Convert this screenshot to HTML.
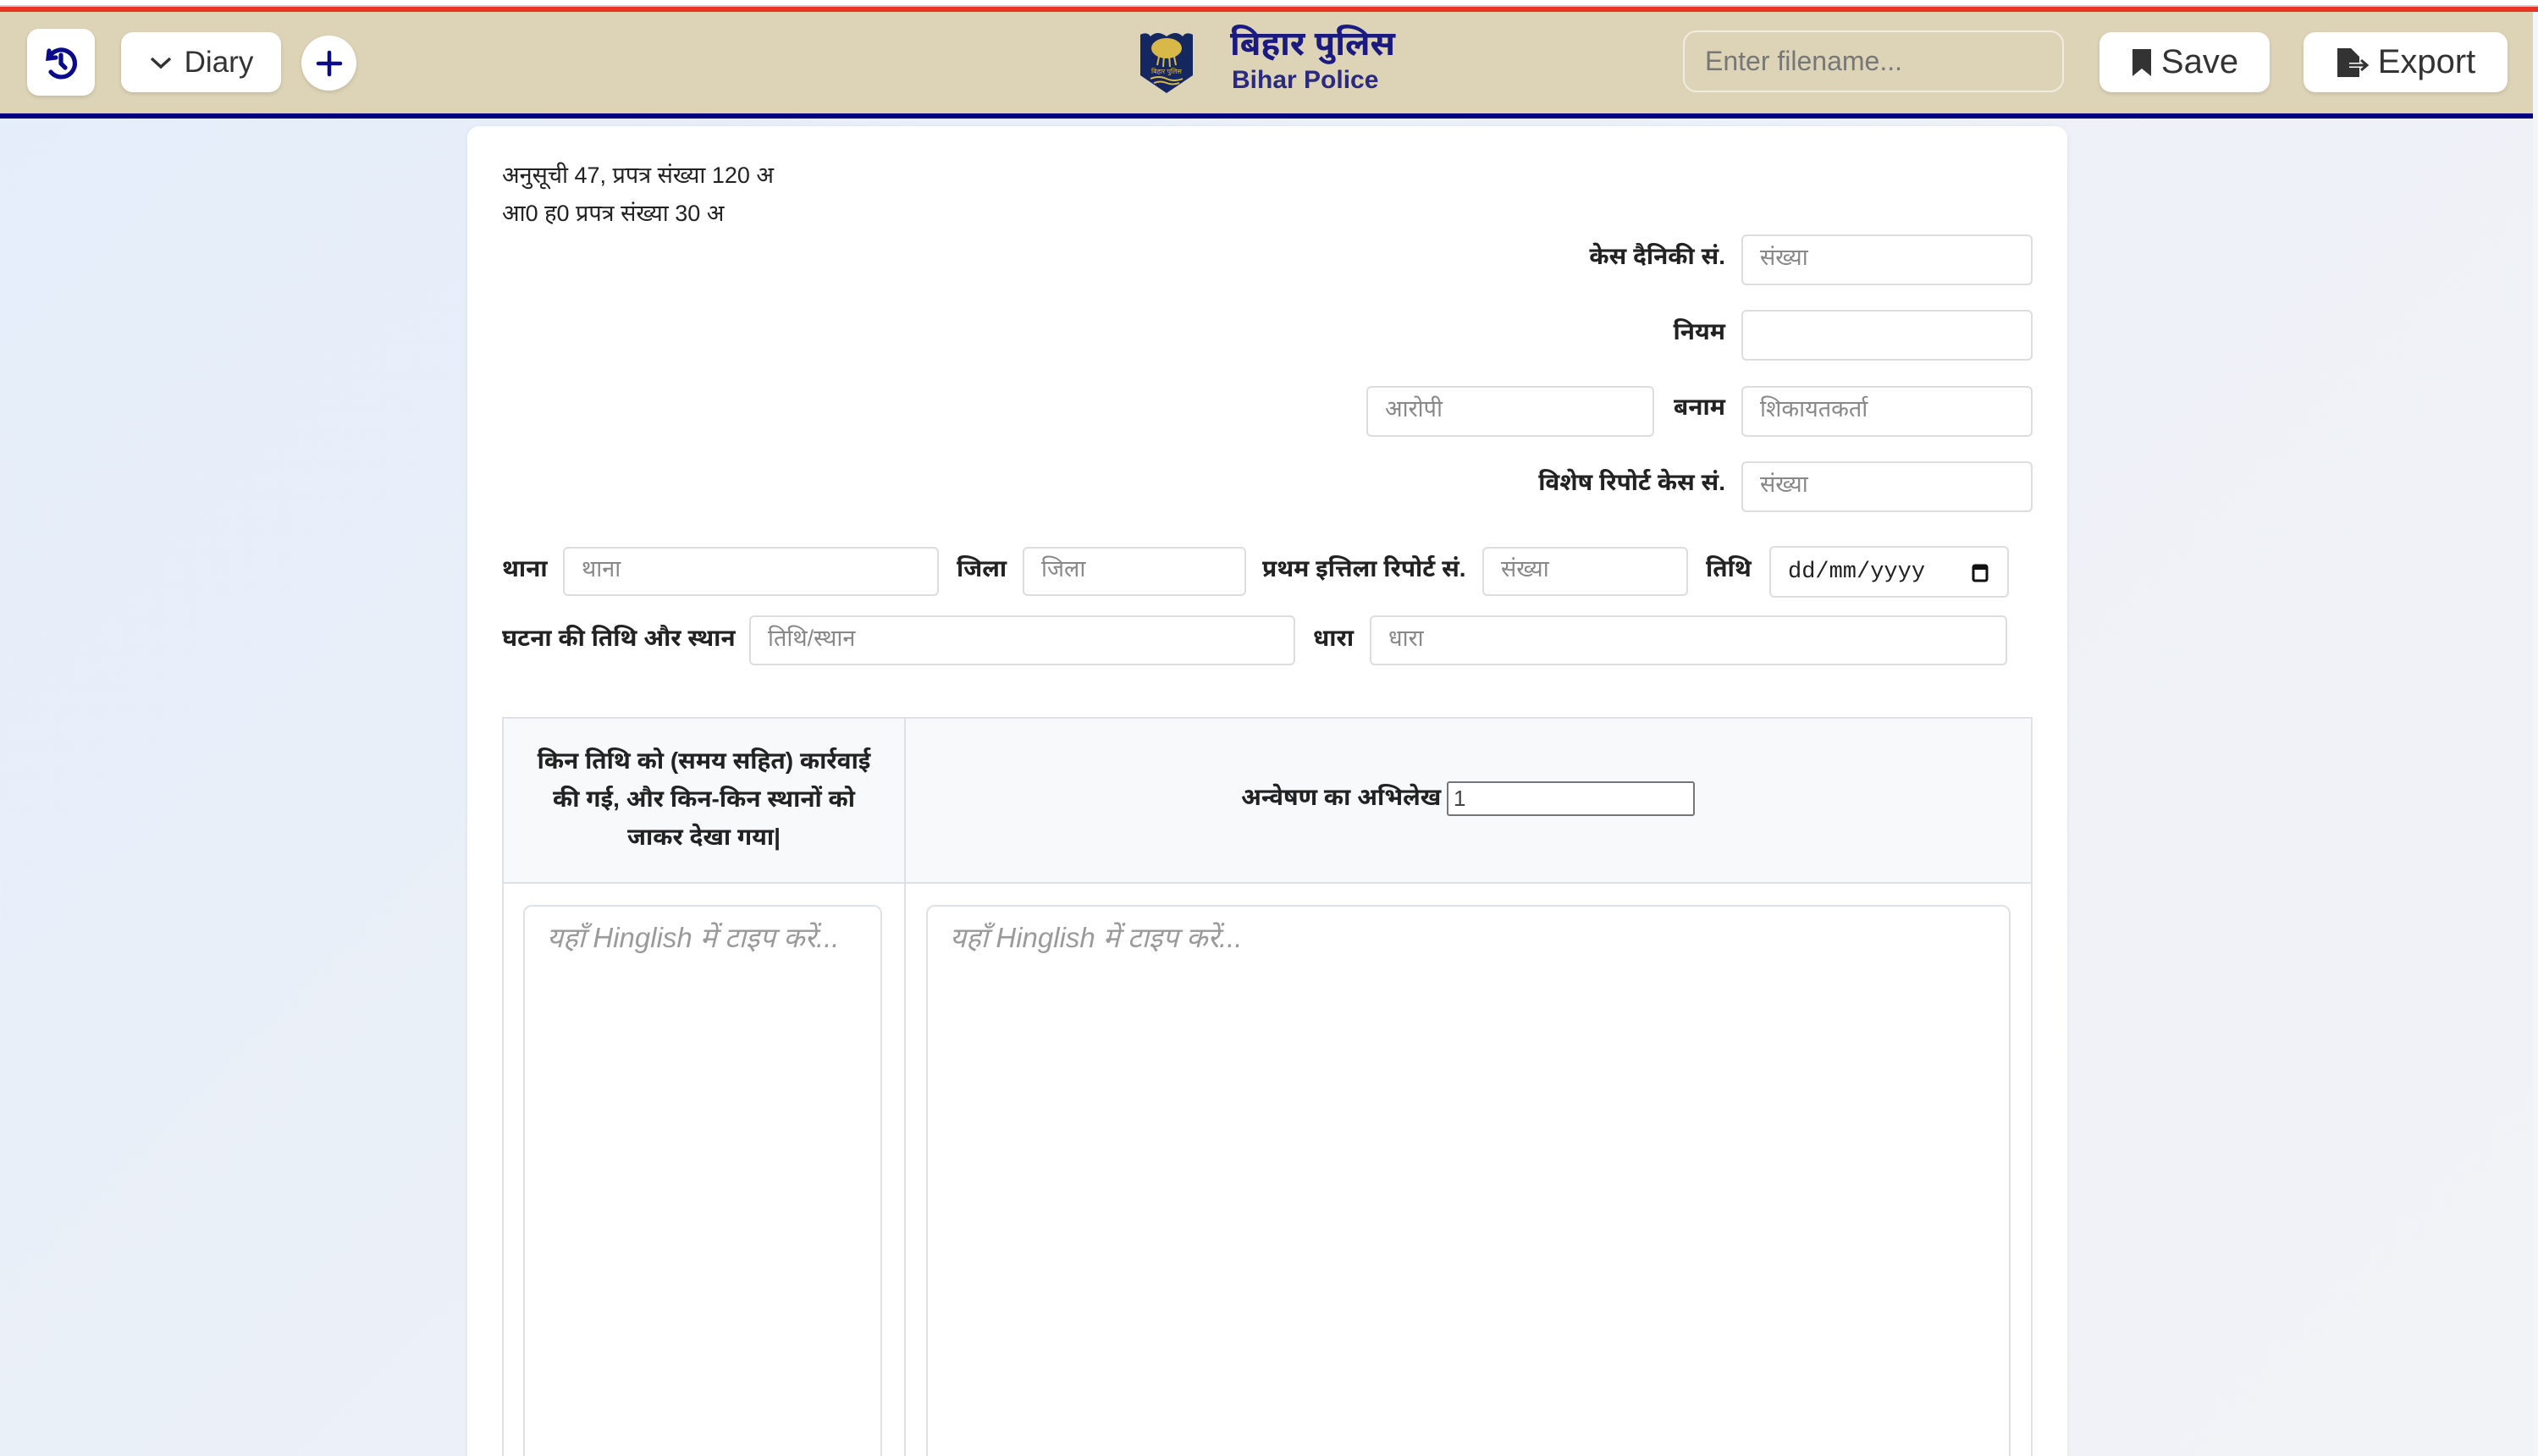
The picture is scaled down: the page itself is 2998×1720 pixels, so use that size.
<!DOCTYPE html>
<html style="width:2998px;height:1720px;overflow:hidden"><head><meta charset="utf-8">
<style>
*{box-sizing:border-box;margin:0;padding:0}
body{width:2998px;height:1720px;overflow:hidden;position:relative;font-family:"Liberation Sans","Noto Sans Devanagari","Lohit Devanagari",sans-serif;background:linear-gradient(135deg,#e4edfa 0%,#eef1f7 60%,#f2f3f7 100%);color:#222}
.abs{position:absolute}
.topline{left:0;top:0;width:2998px;height:8px;background:#fff;border-bottom:2px solid #ccc}
.red{left:0;top:8px;width:2998px;height:6px;background:#e63323}
.hdr{left:0;top:14px;width:2998px;height:120px;background:#ddd3b7}
.navy{left:0;top:134px;width:2998px;height:6px;background:#000080}
.btn{background:#fff;border-radius:14px;box-shadow:0 2px 5px rgba(0,0,0,.12);display:flex;align-items:center;justify-content:center;color:#333}
.card{left:552px;top:149px;width:1890px;height:1600px;background:#fff;border-radius:14px;box-shadow:0 1px 6px rgba(0,0,0,.06)}
.t{font-size:27px;color:#222;white-space:nowrap}
.lbl{font-size:28px;font-weight:bold;color:#222;white-space:nowrap}
.inp{border:2px solid #ddd;border-radius:6px;background:#fff;font-size:27px;color:#888;padding-left:20px;display:flex;align-items:center;white-space:nowrap}
.ph{font-style:italic;color:#9a9a9a;font-size:33px}
</style></head><body>
<div class="abs topline"></div>
<div class="abs red"></div>
<div class="abs hdr"></div>
<div class="abs navy"></div>

<div class="abs btn" style="left:32px;top:34px;width:80px;height:79px">
<svg width="48" height="48" viewBox="0 0 24 24" fill="none" stroke="#0a0a8a" stroke-width="2.6" stroke-linecap="round"><path d="M5 5 L4.5 9.5 L9 9"/><path d="M5 9 A8 8 0 1 1 6 17.5"/><path d="M12 7.5 V12.5 L14.5 15"/></svg>
</div>
<div class="abs btn" style="left:143px;top:38px;width:189px;height:71px;font-size:35px">
<svg width="28" height="20" viewBox="0 0 28 20" style="margin-right:14px"><path d="M3 5 L14 15 L25 5" fill="none" stroke="#333" stroke-width="3.5"/></svg>Diary</div>
<div class="abs btn" style="left:356px;top:42px;width:65px;height:65px;border-radius:50%">
<svg width="32" height="32" viewBox="0 0 32 32"><path d="M16 3V29M3 16H29" stroke="#0a0a8a" stroke-width="4.5" stroke-linecap="round"/></svg></div>

<svg class="abs" style="left:1345px;top:35px" width="66" height="76" viewBox="0 0 66 76">
<path d="M2 6 Q10 2 14 8 Q22 0 33 8 Q44 0 52 8 Q56 2 64 6 V54 L33 75 L2 54 Z" fill="#14275e"/>
<ellipse cx="33" cy="22" rx="18" ry="12" fill="#d9b84a"/>
<path d="M30 30 L29 44 M36 30 L37 44 M24 32 L22 42 M42 32 L44 42" stroke="#d9b84a" stroke-width="2"/>
<text x="33" y="52" font-size="8" fill="#d9b84a" text-anchor="middle">बिहार पुलिस</text>
<path d="M14 58 Q24 54 33 58 Q42 62 52 58 M18 63 Q26 60 33 63 Q40 66 48 63" stroke="#d9b84a" stroke-width="2" fill="none"/>
</svg>
<div class="abs" style="left:1453px;top:30px;font-size:40px;font-weight:bold;color:#1a1a80;white-space:nowrap">बिहार पुलिस</div>
<div class="abs" style="left:1455px;top:78px;font-size:30px;font-weight:bold;color:#2a2a80;white-space:nowrap">Bihar Police</div>

<div class="abs" style="left:1988px;top:36px;width:450px;height:73px;border:2px solid #f0ece0;border-radius:16px;font-size:32px;color:#777;padding-left:24px;display:flex;align-items:center">Enter filename...</div>
<div class="abs btn" style="left:2480px;top:38px;width:201px;height:71px;font-size:40px">
<svg width="26" height="36" viewBox="0 0 26 36" style="margin-right:10px"><path d="M2 2H24V34L13 25L2 34Z" fill="#333"/></svg>Save</div>
<div class="abs btn" style="left:2721px;top:38px;width:241px;height:71px;font-size:40px">
<svg width="42" height="38" viewBox="0 0 42 38" style="margin-right:8px"><path d="M2 2H18L28 12V36H2Z" fill="#333"/><path d="M16 22H36M30 16L37 22L30 28" stroke="#fff" stroke-width="6" fill="none"/><path d="M16 22H36M30 16L37 22L30 28" stroke="#333" stroke-width="3" fill="none"/></svg>Export</div>
<div class="abs" style="left:2992px;top:14px;width:6px;height:1706px;background:#f4f5f8"></div>

<div class="abs card"></div>
<div class="abs t" style="left:593px;top:192px">अनुसूची 47, प्रपत्र संख्या 120 अ</div>
<div class="abs t" style="left:593px;top:237px">आ0 ह0 प्रपत्र संख्या 30 अ</div>

<div class="abs lbl" style="right:960px;top:287px">केस दैनिकी सं.</div>
<div class="abs inp" style="left:2057px;top:277px;width:344px;height:60px">संख्या</div>
<div class="abs lbl" style="right:960px;top:376px">नियम</div>
<div class="abs inp" style="left:2057px;top:366px;width:344px;height:60px"></div>
<div class="abs inp" style="left:1614px;top:456px;width:340px;height:60px">आरोपी</div>
<div class="abs lbl" style="right:960px;top:465px">बनाम</div>
<div class="abs inp" style="left:2057px;top:456px;width:344px;height:60px">शिकायतकर्ता</div>
<div class="abs lbl" style="right:960px;top:554px">विशेष रिपोर्ट केस सं.</div>
<div class="abs inp" style="left:2057px;top:545px;width:344px;height:60px">संख्या</div>

<div class="abs lbl" style="left:593px;top:656px">थाना</div>
<div class="abs inp" style="left:665px;top:646px;width:444px;height:58px">थाना</div>
<div class="abs lbl" style="left:1130px;top:656px">जिला</div>
<div class="abs inp" style="left:1208px;top:646px;width:264px;height:58px">जिला</div>
<div class="abs lbl" style="left:1491px;top:656px">प्रथम इत्तिला रिपोर्ट सं.</div>
<div class="abs inp" style="left:1751px;top:646px;width:243px;height:58px">संख्या</div>
<div class="abs lbl" style="left:2015px;top:656px">तिथि</div>
<div class="abs inp" style="left:2090px;top:645px;width:283px;height:61px;color:#222;font-family:'Liberation Mono',monospace;font-size:27px;justify-content:space-between;padding-right:22px">dd/mm/yyyy<svg width="20" height="24" viewBox="0 0 20 24"><rect x="2" y="4" width="16" height="18" rx="2" fill="none" stroke="#111" stroke-width="3"/><rect x="2" y="4" width="16" height="5" fill="#111"/></svg></div>

<div class="abs lbl" style="left:593px;top:738px">घटना की तिथि और स्थान</div>
<div class="abs inp" style="left:885px;top:727px;width:645px;height:59px">तिथि/स्थान</div>
<div class="abs lbl" style="left:1551px;top:738px">धारा</div>
<div class="abs inp" style="left:1618px;top:727px;width:753px;height:59px">धारा</div>

<div class="abs" style="left:593px;top:847px;width:1808px;height:197px;background:#f8f9fa;border:2px solid #dee2e6"></div>
<div class="abs" style="left:593px;top:1043px;width:1808px;height:700px;border:2px solid #dee2e6;border-top:none"></div>
<div class="abs" style="left:1068px;top:847px;width:2px;height:880px;background:#dee2e6"></div>
<div class="abs lbl" style="left:595px;top:876px;width:473px;text-align:center;line-height:45px;white-space:normal">किन तिथि को (समय सहित) कार्रवाई<br>की गई, और किन-किन स्थानों को<br>जाकर देखा गया|</div>
<div class="abs lbl" style="left:1466px;top:926px">अन्वेषण का अभिलेख</div>
<div class="abs" style="left:1709px;top:923px;width:293px;height:41px;border:2px solid #767676;border-radius:3px;background:#fff;font-size:26px;padding-left:6px;line-height:37px;color:#444">1</div>

<div class="abs" style="left:618px;top:1069px;width:424px;height:700px;border:2px solid #dee2e6;border-radius:10px;padding:18px 26px"><span class="ph">यहाँ Hinglish में टाइप करें...</span></div>
<div class="abs" style="left:1094px;top:1069px;width:1281px;height:700px;border:2px solid #dee2e6;border-radius:10px;padding:18px 26px"><span class="ph">यहाँ Hinglish में टाइप करें...</span></div>
</body></html>
